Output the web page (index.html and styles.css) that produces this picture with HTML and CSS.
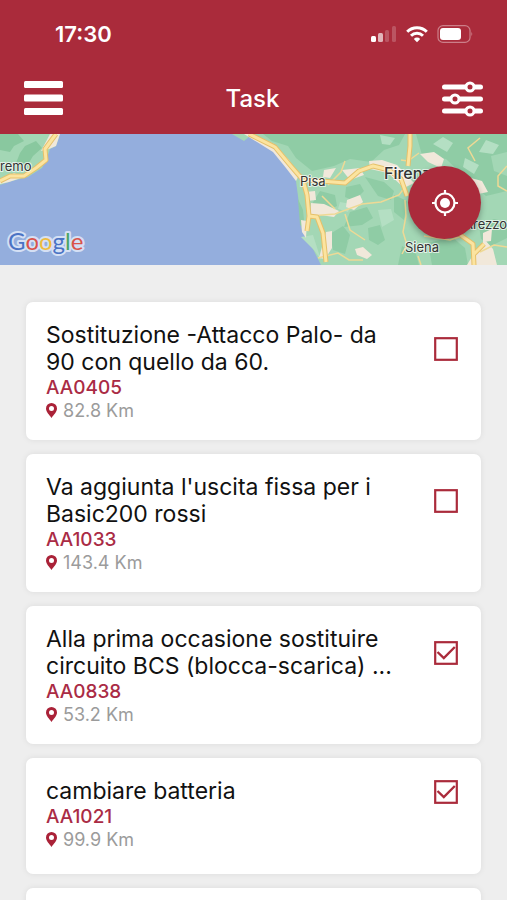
FILE: index.html
```html
<!DOCTYPE html>
<html lang="it">
<head>
    <meta charset="UTF-8">
    <meta name="viewport" content="width=device-width, initial-scale=1.0">
    <title>Task</title>
    <link rel="stylesheet" href="styles.css">
</head>
<body>
    <header class="header">
        <div class="status-bar">
            <span class="time">17:30</span>
            <div class="status-icons">
                <svg width="26" height="18" viewBox="0 0 26 18" fill="#fff">
                    <rect x="0" y="11" width="5" height="6" rx="1.500"/>
                    <rect x="7" y="8" width="5" height="9" rx="1.500" opacity=".65"/>
                    <rect x="14" y="5" width="4" height="12" rx="1.500" opacity=".2"/>
                    <rect x="21" y="1" width="4" height="16" rx="1.500" opacity=".2"/>
                </svg>
                <svg width="22" height="18" viewBox="0 0 22 18" fill="none" stroke="#fff" stroke-width="3">
                    <path d="M1.2 6.8a14 14 0 0 1 19.6 0"/>
                    <path d="M5 10.8a8.6 8.6 0 0 1 12 0"/>
                    <path d="M11 17.2l-3.2-3.3a4.6 4.6 0 0 1 6.4 0z" fill="#fff" stroke="none"/>
                </svg>
                <svg width="36" height="18" viewBox="0 0 36 18">
                    <rect x="1" y=".6" width="32" height="16.8" rx="5" fill="none" stroke="#fff" stroke-width="1.2" opacity=".4"/>
                    <rect x="3" y="3" width="21" height="12" rx="3" fill="#fff"/>
                    <path d="M34.5 6.5q1.5 2.500 0 5z" fill="#fff" opacity=".5"/>
                </svg>
            </div>
        </div>
        <nav class="nav">
            <button class="icon-btn" aria-label="Menu">
                <svg width="40" height="36" viewBox="0 0 40 36" fill="#fff">
                    <rect x="0" y="0" width="39" height="7" rx="1.500"/>
                    <rect x="0" y="13.500" width="39" height="7" rx="1.500"/>
                    <rect x="0" y="27" width="39" height="7" rx="1.500"/>
                </svg>
            </button>
            <h1 class="title">Task</h1>
            <button class="icon-btn" aria-label="Filtri">
                <svg width="42" height="36" viewBox="0 0 42 36" fill="#aa2b3b" stroke="#fff">
                    <path d="M3.500 6h36M3.500 18h36M3.500 30h36" stroke-width="5" stroke-linecap="round"/>
                    <circle cx="29" cy="6" r="4" stroke-width="3"/>
                    <circle cx="14" cy="18" r="4" stroke-width="3"/>
                    <circle cx="29" cy="30" r="4" stroke-width="3"/>
                </svg>
            </button>
        </nav>
    </header>

    <section class="map">
        <svg class="map-canvas" viewBox="0 0 507 131" preserveAspectRatio="xMidYMid slice">
            <rect width="507" height="131" fill="#94aedd"/>
            <!-- Liguria -->
            <path d="M0 0H60L56 12 50 15 47 24 42 34 28 43 12 47 0 51z" fill="#a3d7b5"/>
            <path d="M0 0H18L24 7 14 12 10 18 0 16zM25 12L36 7 42 14 33 22 27 32 16 29 20 19z" fill="#89c89f"/>
            <path d="M50 0H60L56 12 49 15 41 17zM0 47L14 39 24 43 9 48 0 50z" fill="#f1e8da"/>
            <!-- Toscana -->
            <path d="M232 0H507V131H321L311 111 302 97 298 62 295 40 286 26 273 14 259 7 250 2 244 7z" fill="#a3d7b5"/>
            <g fill="#8fcca5">
                <path d="M263 0H405L399 11 384 16 371 28 350 25 334 32 312 37 296 24 288 12 272 7z"/>
                <path d="M416 0H507V18L491 22 494 37 507 42V57L486 62 465 43 446 25 422 21z"/>
                <path d="M346 53L360 50 364 57 354 67 345 63zM320 57L335 61 337 72 323 79 312 70z"/>
                <path d="M350 78L367 73 373 84 362 91 344 93zM330 100L343 92 350 101 345 120 333 116z"/>
                <path d="M368 94L380 91 385 106 378 111 369 106zM365 43L384 48 394 57 391 66 378 62zM394 61L407 67 404 86 394 78z"/>
                <path d="M398 131L402 112 416 120 419 131zM479 92L494 85 507 88V104L491 112 481 105zM298 65L303 76 305 96 300 91z"/>
                <path d="M428 109L452 103 465 114 468 131H432z"/>
            </g>
            <g fill="#b4dfc3">
                <path d="M380 1L395 4 390 11 382 10zM433 10L443 3 453 9 447 18zM486 6L499 11 493 20 479 18zM465 24L479 31 474 40 463 33z"/>
                <path d="M301 103L313 101 321 126 314 116zM340 68L351 70 348 78 338 75zM378 76L391 75 394 86 382 93z"/>
            </g>
            <g fill="#f1e8da">
                <path d="M244 0L253 0 274 10 289 26 299 41 296 47 286 34 273 18 257 8z"/>
                <path d="M369 27L382 26 397 31 414 49 404 54 388 39 370 35z"/>
                <path d="M311 69L324 70 339 77 334 83 320 81 310 85zM347 66L360 61 363 68 354 76 346 73z"/>
                <path d="M324 36L336 34 330 44 323 43zM342 36L360 34 364 41 350 46zM420 20L434 18 444 25 441 34 428 28z"/>
                <path d="M326 98L332 97 332 114 325 125 319 124zM355 115L363 113 372 121 367 125 357 121z"/>
                <path d="M476 116L485 106 493 115 497 131H467zM483 99L492 95 491 107 483 108zM301 86L307 87 306 104 302 98z"/>
                <path d="M305 58L315 57 316 66 307 67zM471 44L482 47 488 58 478 60z"/>
            </g>
            <g fill="none" stroke="#eed995" stroke-width="1.500">
                <path d="M310 82L335 80 362 70 381 68 399 61 405 53M345 80L350 96 365 106M405 66L406 82 403 98 407 111 402 120"/>
                <path d="M322 62L335 75M318 124L338 119 349 126 363 126M419 19L408 27 401 26M507 32L498 42 498 52 507 57M418 122L421 131"/>
                <path d="M424 102L450 106 465 101M480 118L494 111 507 113M328 51L341 38 345 27M475 27L468 14 480 4"/>
            </g>
            <g fill="none" stroke="#e6c06a" stroke-width="5" stroke-linejoin="round">
                <path d="M0 47L10 42 24 42 36 34 46 26 45 15 56 0"/>
                <path d="M249 0L275 13 290 31 303 46 307 61 309 82 307 97M309 82L317 83 323 99 326 128"/>
                <path d="M303 46L321 47 345 49 359 37 373 32 389 36 401 45 407 62M410 0V12L408 32M459 100L473 110 474 131M474 120L484 110"/>
            </g>
            <g fill="none" stroke="#fbe4a0" stroke-width="3" stroke-linejoin="round">
                <path d="M0 47L10 42 24 42 36 34 46 26 45 15 56 0"/>
                <path d="M249 0L275 13 290 31 303 46 307 61 309 82 307 97M309 82L317 83 323 99 326 128"/>
                <path d="M303 46L321 47 345 49 359 37 373 32 389 36 401 45 407 62M410 0V12L408 32M459 100L473 110 474 131M474 120L484 110"/>
            </g>
            <g class="place">
                <text x="0" y="37">remo</text>
                <text x="300" y="52">Pisa</text>
                <text x="384" y="45" class="city">Firenze</text>
                <text x="405" y="118">Siena</text>
                <text x="464" y="95">Arezzo</text>
            </g>
            <text x="8" y="116" class="brand"><tspan fill="#4a73c4">G</tspan><tspan fill="#d9534a">o</tspan><tspan fill="#eebc3f">o</tspan><tspan fill="#4a73c4">g</tspan><tspan fill="#4aa564">l</tspan><tspan fill="#d9534a">e</tspan></text>
        </svg>
        <button class="locate" aria-label="La mia posizione">
            <svg width="28" height="28" viewBox="0 0 28 28" fill="none" stroke="#fff">
                <circle cx="14" cy="14" r="9.500" stroke-width="2.200"/>
                <circle cx="14" cy="14" r="5" fill="#fff" stroke="none"/>
                <path d="M14 1v4M14 23v4M1 14h4M23 14h4" stroke-width="2.200"/>
            </svg>
        </button>
    </section>

    <svg width="0" height="0" class="defs">
        <symbol id="pin" viewBox="0 0 11 15">
            <path d="M5.500 0A5.500 5.500 0 0 0 0 5.500C0 9 3.500 12 5.500 15 7.500 12 11 9 11 5.500A5.500 5.500 0 0 0 5.500 0zm0 3a2.500 2.500 0 1 1 0 5 2.500 2.500 0 0 1 0-5z" fill="#aa2238" fill-rule="evenodd"/>
        </symbol>
        <symbol id="box" viewBox="0 0 24 24">
            <rect x="1.200" y="1.200" width="21.600" height="21.600" fill="none" stroke="#aa2b3b" stroke-width="2.200"/>
            <path class="tick" d="M3.500 11l6.300 6L20.800 6" fill="none" stroke="#aa2b3b" stroke-width="2.400"/>
        </symbol>
    </svg>

    <main class="content">
        <ul class="tasks">
            <li class="card">
                <div class="card-head">
                    <label class="card-title" for="t1">Sostituzione -Attacco Palo- da 90 con quello da 60.</label>
                    <span class="check">
                        <input type="checkbox" id="t1">
                        <svg width="24" height="24"><use href="#box"/></svg>
                    </span>
                </div>
                <div class="code">AA0405</div>
                <div class="distance"><svg width="11" height="15"><use href="#pin"/></svg>82.8 Km</div>
            </li>
            <li class="card">
                <div class="card-head">
                    <label class="card-title" for="t2">Va aggiunta l'uscita fissa per i Basic200 rossi</label>
                    <span class="check">
                        <input type="checkbox" id="t2">
                        <svg width="24" height="24"><use href="#box"/></svg>
                    </span>
                </div>
                <div class="code">AA1033</div>
                <div class="distance"><svg width="11" height="15"><use href="#pin"/></svg>143.4 Km</div>
            </li>
            <li class="card">
                <div class="card-head">
                    <label class="card-title" for="t3">Alla prima occasione sostituire circuito BCS (blocca-scarica) ...</label>
                    <span class="check">
                        <input type="checkbox" id="t3" checked>
                        <svg width="24" height="24"><use href="#box"/></svg>
                    </span>
                </div>
                <div class="code">AA0838</div>
                <div class="distance"><svg width="11" height="15"><use href="#pin"/></svg>53.2 Km</div>
            </li>
            <li class="card">
                <div class="card-head">
                    <label class="card-title" for="t4">cambiare batteria</label>
                    <span class="check">
                        <input type="checkbox" id="t4" checked>
                        <svg width="24" height="24"><use href="#box"/></svg>
                    </span>
                </div>
                <div class="code">AA1021</div>
                <div class="distance"><svg width="11" height="15"><use href="#pin"/></svg>99.9 Km</div>
            </li>
            <li class="card"></li>
        </ul>
    </main>
</body>
</html>
```

FILE: styles.css
```css
* {
    box-sizing: border-box;
}
body {
    margin: 0;
    height: 100vh;
    display: flex;
    flex-direction: column;
    font-family: Inter, "Liberation Sans", sans-serif;
    background-color: #eeeeee;
    color: #111;
}
svg {
    display: block;
}
button {
    padding: 0;
    border: none;
    background: none;
    cursor: pointer;
}

/* header */
.header {
    flex-shrink: 0;
    background-color: #aa2b3b;
    color: white;
    padding: 20px 24px 16px;
}
.status-bar {
    display: flex;
    justify-content: space-between;
    align-items: center;
    height: 28px;
    padding: 0 10px 0 31px;
}
.time {
    font-size: 22px;
    font-weight: 600;
}
.status-icons {
    display: flex;
    gap: 9px;
}
.nav {
    display: flex;
    justify-content: space-between;
    align-items: center;
    margin-top: 32px;
}
.title {
    margin: 0;
    font-size: 24px;
    line-height: 38px;
    font-weight: 500;
}

/* map */
.map {
    flex-shrink: 0;
    position: relative;
    height: 131px;
}
.map-canvas {
    width: 100%;
    height: 100%;
}
.place {
    font-size: 13px;
    fill: #333;
    stroke: rgba(255, 255, 255, 0.7);
    stroke-width: 2px;
    paint-order: stroke;
}
.city {
    font-size: 16px;
    font-weight: 500;
}
.brand {
    font-family: Lato, sans-serif;
    font-size: 24px;
    font-weight: 400;
    stroke: #d5e0f4;
    stroke-width: 4px;
    stroke-linejoin: round;
    paint-order: stroke;
}
.locate {
    position: absolute;
    top: 32px;
    right: 26px;
    width: 73px;
    height: 73px;
    border-radius: 50%;
    background-color: #aa2b3b;
    box-shadow: 0 3px 6px rgba(0, 0, 0, 0.3);
    display: flex;
    align-items: center;
    justify-content: center;
}

/* tasks */
.defs {
    position: absolute;
}
.content {
    flex: 1;
    min-height: 0;
    overflow-y: auto;
    scrollbar-width: none;
}
.tasks {
    list-style: none;
    margin: 0;
    padding: 37px 26px;
    display: flex;
    flex-direction: column;
    gap: 14px;
}
.card {
    min-height: 116px;
    padding: 20px 23px 19px 20px;
    border-radius: 7px;
    background-color: white;
    box-shadow: 0 0 6px rgba(0, 0, 0, 0.08);
}
.card-head {
    display: flex;
    justify-content: space-between;
    align-items: center;
    gap: 32px;
}
.card-title {
    font-size: 23px;
    line-height: 27px;
}
.check {
    position: relative;
    flex-shrink: 0;
}
.check input {
    position: absolute;
    inset: 0;
    width: 100%;
    height: 100%;
    margin: 0;
    opacity: 0;
    cursor: pointer;
}
.check svg {
    --tick: 0;
}
.check input:checked + svg {
    --tick: 1;
}
.tick {
    opacity: var(--tick);
}
.code {
    font-size: 19px;
    line-height: 24px;
    font-weight: 500;
    color: #aa2b45;
}
.distance {
    display: flex;
    align-items: center;
    gap: 6px;
    font-size: 18px;
    line-height: 21px;
    color: #9b9b9b;
}
```
